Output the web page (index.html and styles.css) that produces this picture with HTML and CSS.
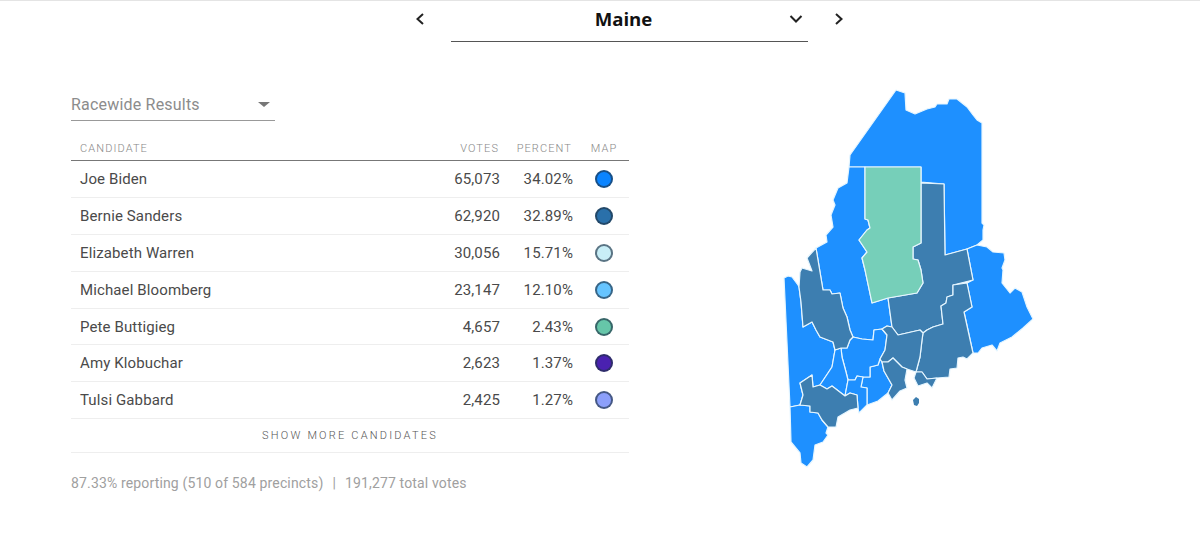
FILE: index.html
```html
<!DOCTYPE html>
<html lang="en">
<head>
<meta charset="utf-8">
<title>Maine results</title>
<link rel="stylesheet" href="styles.css">
</head>
<body>
<nav class="state-nav">
  <svg class="chev" viewBox="0 0 12 14"><path d="M9 2 L3.5 7 L9 12"/></svg>
  <div class="state-select">
    <span class="state-name">Maine</span>
    <svg class="chev-down" viewBox="0 0 14 10"><path d="M1.5 2 L7 7.5 L12.5 2"/></svg>
  </div>
  <svg class="chev" viewBox="0 0 12 14"><path d="M3 2 L8.5 7 L3 12"/></svg>
</nav>
<main class="content">
  <section class="results">
    <div class="race-select">
      <span>Racewide Results</span>
      <i class="caret"></i>
    </div>
    <div class="row head">
      <span class="name">Candidate</span>
      <span class="votes">Votes</span>
      <span class="pct">Percent</span>
      <span class="map-col">Map</span>
    </div>
    <div class="row"><span class="name">Joe Biden</span><span class="votes">65,073</span><span class="pct">34.02%</span><span class="map-col"><i class="dot c1"></i></span></div>
    <div class="row"><span class="name">Bernie Sanders</span><span class="votes">62,920</span><span class="pct">32.89%</span><span class="map-col"><i class="dot c2"></i></span></div>
    <div class="row"><span class="name">Elizabeth Warren</span><span class="votes">30,056</span><span class="pct">15.71%</span><span class="map-col"><i class="dot c3"></i></span></div>
    <div class="row"><span class="name">Michael Bloomberg</span><span class="votes">23,147</span><span class="pct">12.10%</span><span class="map-col"><i class="dot c4"></i></span></div>
    <div class="row"><span class="name">Pete Buttigieg</span><span class="votes">4,657</span><span class="pct">2.43%</span><span class="map-col"><i class="dot c5"></i></span></div>
    <div class="row"><span class="name">Amy Klobuchar</span><span class="votes">2,623</span><span class="pct">1.37%</span><span class="map-col"><i class="dot c6"></i></span></div>
    <div class="row"><span class="name">Tulsi Gabbard</span><span class="votes">2,425</span><span class="pct">1.27%</span><span class="map-col"><i class="dot c7"></i></span></div>
    <div class="more">Show more candidates</div>
    <p class="summary">87.33% reporting (510 of 584 precincts)<span class="sep">|</span>191,277 total votes</p>
  </section>
  <svg class="map" viewBox="760 80 290 400" width="290" height="400">
    <g class="blue">
      <polygon points="896,90 905,93 906,110 915,114 927,109 935,107 937,104 947,104 949,99 957,99 967,107 973,115 977,120 982,123 982,223 984,225 983,230 983,240 977,245 967,249 945,255 944,184 921,182 921,167 849,167 850,155"/>
      <polygon points="849,167 865,167 865,219 868,220 870,228 867,230 859,240 867,252 862,258 865,270 872,303 888,298 892,327 887,326 882,329 874,330 873,340 862,339 853,337 850,330 847,317 843,308 840,293 832,294 830,290 823,290 816,248 827,242 826,235 833,227 831,215 835,205 833,200 838,188 847,183"/>
      <polygon points="967,249 977,245 987,247 993,252 1004,253 1005,260 1002,268 1003,270 1002,283 1010,293 1015,288 1022,292 1027,307 1033,319 1023,328 1012,337 1000,343 997,351 992,345 982,348 978,353 973,353 964,312 972,307 967,283 973,280"/>
      <polygon points="784,278 788,276 792,277 798,285 799,287 801,302 803,327 812,322 816,330 820,337 833,342 835,350 832,367 820,385 813,387 812,375 800,383 803,395 800,405 790,407"/>
      <polygon points="790,407 800,405 810,406 810,412 818,413 822,420 828,427 826,433 828,435 823,442 815,445 813,460 807,467 801,463 800,453 791,442"/>
      <polygon points="880,359 882,362 884,371 892,385 888,393 878,401 867,405 867,388 861,387 863,377 870,377 870,367 878,365"/>
      <polygon points="853,337 862,339 873,340 874,330 882,329 887,335 885,350 880,359 878,365 870,367 870,377 863,377 857,376 855,380 848,380 846,372 842,357 841,348 847,348 850,340"/>
      <polygon points="835,350 841,348 842,357 846,372 848,380 845,396 832,386 827,389 820,385 832,367"/>
      <polygon points="848,380 855,380 857,376 863,377 861,387 867,388 867,405 859,413 858,408 857,395 850,393 845,396"/>
    </g>
    <g class="dark">
      <polygon points="921,183 944,184 945,255 967,249 973,280 953,285 953,295 947,297 946,303 941,306 943,324 933,327 927,330 923,333 920,330 898,335 892,327 888,298 917,293 923,283 921,270 918,260 913,259 913,247 921,243"/>
      <polygon points="967,283 972,307 964,312 973,353 967,359 963,357 958,358 957,368 950,369 949,377 937,378 927,379 922,372 916,372 920,357 922,340 923,333 927,330 933,327 943,324 941,306 946,303 947,297 953,295 953,285"/>
      <polygon points="922,372 927,379 937,378 932,388 927,383 918,386 914,378 916,372"/>
      <polygon points="882,329 887,326 892,327 898,335 920,330 923,333 922,340 920,357 916,372 907,369 902,367 893,358 888,362 882,362 880,359 885,350 887,335"/>
      <polygon points="882,362 888,362 893,358 902,367 907,369 905,380 907,388 900,391 892,400 888,393 892,385 884,371"/>
      <polygon points="816,248 823,290 830,290 832,294 840,293 843,308 847,317 850,330 853,337 850,340 847,348 841,348 835,350 833,342 820,337 816,330 812,322 803,327 801,302 799,287 800,272 802,268 812,271 807,258"/>
      <polygon points="812,375 813,387 820,385 827,389 832,386 845,396 850,393 857,395 858,408 850,410 838,417 836,427 828,427 822,420 818,413 810,412 810,406 800,405 803,395 800,383"/>
      <polygon class="islet" points="916,397 919,399 919,403 917,406 914,405 913,400"/>
    </g>
    <polygon class="green" points="865,167 921,167 921,243 913,247 913,259 918,260 921,270 923,283 917,293 888,298 872,303 865,270 862,258 867,252 859,240 867,230 870,228 868,220 865,219"/>
  </svg>
</main>
</body>
</html>
```
FILE: styles.css
```css
* { box-sizing: border-box; }
html, body { margin: 0; padding: 0; }
body {
  background: #fff;
  font-family: Roboto, "Liberation Sans", sans-serif;
  height: 553px;
  overflow: hidden;
  border-top: 1px solid #e4e4e4;
}
.state-nav {
  display: flex;
  justify-content: center;
  align-items: flex-start;
  padding-left: 59px;
  height: 41px;
}
.chev {
  width: 12px;
  height: 14px;
  margin-top: 11px;
  fill: none;
  stroke: #222;
  stroke-width: 2;
}
.state-select {
  width: 357px;
  height: 41px;
  margin: 0 25px;
  border-bottom: 1px solid #555;
  display: flex;
  align-items: flex-start;
  position: relative;
  justify-content: center;
}
.state-name {
  font-family: "Open Sans", sans-serif;
  font-weight: 700;
  font-size: 18.6px;
  line-height: 36px;
  color: #111;
  margin-left: -12px;
}
.chev-down {
  position: absolute;
  right: 5px;
  top: 13px;
  width: 14px;
  height: 10px;
  fill: none;
  stroke: #222;
  stroke-width: 2;
}
.content {
  display: flex;
  align-items: flex-start;
  padding-left: 71px;
}
.results { width: 558px; margin-top: 42px; }
.race-select {
  width: 204px;
  height: 37px;
  border-bottom: 1px solid #999;
  display: flex;
  justify-content: space-between;
  align-items: center;
  font-size: 16px;
  letter-spacing: 0.2px;
  color: #8c8c8c;
  padding-right: 5px;
  padding-top: 5px;
}
.caret {
  width: 0;
  height: 0;
  border-left: 6px solid transparent;
  border-right: 6px solid transparent;
  border-top: 5px solid #777;
}
.row {
  display: grid;
  grid-template-columns: 1fr 90px 73px 56px;
  align-items: center;
  height: 36.9px;
  border-bottom: 1px solid #eee;
  font-size: 15px;
  letter-spacing: 0.12px;
  color: #4a4a4a;
}
.name { padding-left: 9px; }
.votes, .pct { text-align: right; }
.map-col { display: flex; justify-content: center; padding-left: 6px; }
.head {
  height: 40px;
  padding-top: 16px;
  border-bottom: 1px solid #777;
  font-size: 11px;
  font-weight: 300;
  letter-spacing: 1.1px;
  color: #888;
  text-transform: uppercase;
}
.head .votes { padding-right: 1px; }
.head .pct { padding-right: 1px; }
.dot {
  display: block;
  width: 18px;
  height: 18px;
  border-radius: 50%;
  border: 2px solid rgba(30, 50, 70, 0.65);
}
.c1 { background: #0a84ff; }
.c2 { background: #2a70aa; }
.c3 { background: #c8eef7; }
.c4 { background: #66c4ff; }
.c5 { background: #66c6a9; }
.c6 { background: #4a21b0; }
.c7 { background: #8c9ffa; }
.more {
  height: 34px;
  display: flex;
  align-items: center;
  justify-content: center;
  border-bottom: 1px solid #eee;
  font-size: 11px;
  font-weight: 300;
  letter-spacing: 2.2px;
  color: #555;
  text-transform: uppercase;
}
.summary {
  margin: 22px 0 0;
  font-size: 14px;
  letter-spacing: 0.15px;
  color: #a0a0a0;
}
.sep { margin: 0 9px; }
.map { flex: none; margin-left: 131px; margin-top: 38px; }
.map polygon { stroke: #e6f6ff; stroke-width: 1.2; stroke-linejoin: round; }
.blue polygon { fill: #1e90ff; }
.dark polygon { fill: #3d7eb0; }
.map .green { fill: #76cfb9; }
.map .islet { stroke: none; }
```
